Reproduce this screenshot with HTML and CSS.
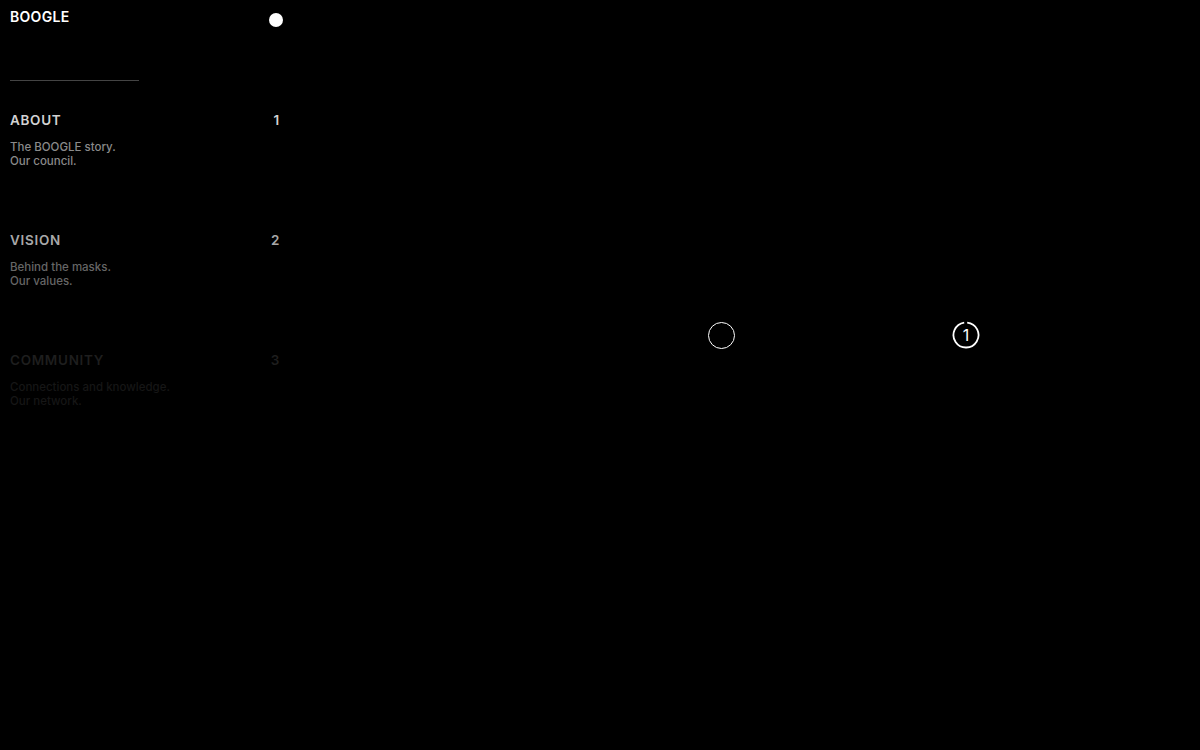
FILE: index.html
```html
<!DOCTYPE html>
<html lang="en">
<head>
<meta charset="utf-8">
<title>BOOGLE</title>
<link rel="stylesheet" href="styles.css">
</head>
<body>
<div class="page">
  <aside class="sidebar">
    <header class="top">
      <div class="logo">BOOGLE</div>
      <span class="dot"></span>
    </header>
    <hr class="rule">
    <nav class="menu">
      <section class="item item-1">
        <div class="item-head"><span class="title">ABOUT</span><span class="num">1</span></div>
        <p class="desc">The BOOGLE story.<br>Our council.</p>
      </section>
      <section class="item item-2">
        <div class="item-head"><span class="title">VISION</span><span class="num">2</span></div>
        <p class="desc">Behind the masks.<br>Our values.</p>
      </section>
      <section class="item item-3">
        <div class="item-head"><span class="title">COMMUNITY</span><span class="num">3</span></div>
        <p class="desc">Connections and knowledge.<br>Our network.</p>
      </section>
    </nav>
  </aside>
  <main class="stage">
    <div class="controls">
      <span class="ring"></span>
      <span class="counter">
        <svg class="counter-ring" width="28" height="28" viewBox="0 0 28 28">
          <path d="M15.2 1.56 A12.5 12.5 0 1 1 12.2 1.63" fill="none" stroke="#fff" stroke-width="1.8"/>
        </svg>
        <span class="counter-num">1</span>
      </span>
    </div>
  </main>
</div>
</body>
</html>
```

FILE: styles.css
```css
html, body {
  margin: 0;
  padding: 0;
  background: #000;
}
body {
  font-family: Inter, "Noto Sans", sans-serif;
  color: #fff;
  width: 1200px;
  height: 750px;
  overflow: hidden;
}
.page {
  display: flex;
  height: 750px;
}
.sidebar {
  width: 273px;
  padding: 0 0 0 10px;
  flex: none;
}
.top {
  display: flex;
  justify-content: space-between;
  align-items: flex-start;
  padding-top: 10px;
  height: 30px;
}
.logo {
  font-size: 14px;
  font-weight: 600;
  letter-spacing: 0.3px;
  line-height: 14px;
}
.dot {
  width: 14px;
  height: 14px;
  border-radius: 50%;
  background: #fff;
  margin-top: 3px;
}
.rule {
  border: 0;
  border-top: 1px solid #444;
  width: 129px;
  margin: 40px 0 0 0;
}
.menu {
  display: flex;
  flex-direction: column;
  margin-top: 31px;
}
.item {
  height: 120px;
}
.item-head {
  display: flex;
  justify-content: space-between;
  font-size: 13.5px;
  font-weight: 600;
  letter-spacing: 0.7px;
  line-height: 16px;
  padding-right: 3px;
}
.desc {
  margin: 12px 0 0 0;
  font-size: 11.5px;
  font-weight: 500;
  line-height: 14px;
  letter-spacing: 0;
}
.item-1 .item-head { color: #d2d2d2; }
.item-1 .desc { color: #8a8a8a; }
.item-2 .item-head { color: #a8a8a8; }
.item-2 .desc { color: #666; }
.item-3 .item-head { color: #1e1e1e; }
.item-3 .desc { color: #161616; }
.stage {
  flex: 1;
  position: relative;
}
.controls {
  display: flex;
  align-items: center;
  gap: 217px;
  padding: 321px 0 0 425px;
}
.ring {
  width: 25px;
  height: 25px;
  border: 1.8px solid #fff;
  border-radius: 50%;
}
.counter {
  position: relative;
  width: 28px;
  height: 28px;
  display: flex;
  align-items: center;
  justify-content: center;
}
.counter-ring {
  position: absolute;
  left: 0;
  top: 0;
}
.counter-num {
  font-size: 16px;
  line-height: 16px;
  font-weight: 400;
}
```
